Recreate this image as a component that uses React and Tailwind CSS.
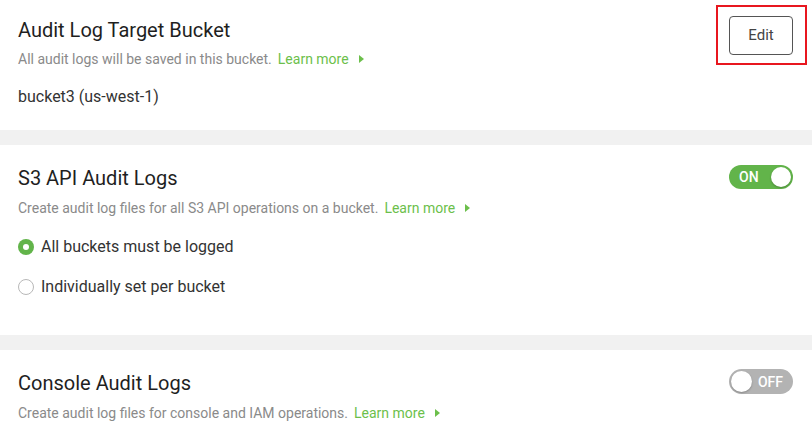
import React from 'react'

function LearnMore() {
  return (
    <a className="ml-[6px] inline-flex items-center text-[#6cbf4b]" href="#">
      Learn more
      <svg className="ml-[10px] w-[5px] h-[8px]" viewBox="0 0 5 8" aria-hidden="true">
        <path d="M0 0 L5 4 L0 8 Z" fill="#6cbf4b" />
      </svg>
    </a>
  )
}

function Toggle({ on }) {
  if (on) {
    return (
      <div className="w-[64px] h-[24px] rounded-full bg-[#62b44a] flex items-center justify-between pl-[10px] pr-[2px]">
        <span className="text-white text-[14px] font-medium leading-none">ON</span>
        <span className="w-[20px] h-[20px] rounded-full bg-white shadow-[0_1px_2px_rgba(0,0,0,0.25)]" />
      </div>
    )
  }
  return (
    <div className="w-[64px] h-[25px] rounded-full bg-[#b3b3b3] flex items-center justify-between pl-[2px] pr-[10px]">
      <span className="w-[21px] h-[21px] rounded-full bg-white shadow-[0_1px_2px_rgba(0,0,0,0.25)]" />
      <span className="text-white text-[14px] font-medium leading-none">OFF</span>
    </div>
  )
}

function Radio({ checked, label }) {
  return (
    <label className="flex items-center h-5">
      {checked ? (
        <span className="w-[16px] h-[16px] rounded-full bg-[#62b44a] flex items-center justify-center">
          <span className="w-[6px] h-[6px] rounded-full bg-white" />
        </span>
      ) : (
        <span className="w-[16px] h-[16px] rounded-full border border-[#b8b8b8] bg-white" />
      )}
      <span className="ml-[7px] text-[16px] text-[#333]">{label}</span>
    </label>
  )
}

export default function App() {
  return (
    <div className="w-[812px] h-[438px] bg-[#f1f1f1] overflow-hidden text-[#222]" style={{ fontFamily: 'Roboto, "Noto Sans", sans-serif' }}>
      {/* Target bucket */}
      <section className="h-[130px] bg-white pl-[18px] pr-[19px] pt-[18px] flex justify-between items-start">
        <div>
          <h2 className="text-[20px] leading-6 text-[#1f1f1f]">Audit Log Target Bucket</h2>
          <p className="mt-[7px] text-[14px] leading-5 text-[#8a8a8a]">
            All audit logs will be saved in this bucket.
            <LearnMore />
          </p>
          <p className="mt-[18px] text-[16px] leading-5 text-[#333]">bucket3 (us-west-1)</p>
        </div>
        <div className="relative mt-[-2px]">
          <button className="w-[64px] h-[39px] rounded-[4px] border border-[#555] bg-white text-[15px] text-[#444]">
            Edit
          </button>
          <div className="absolute left-[-13px] top-[-11px] w-[91px] h-[60px] border-2 border-[#e8161f] pointer-events-none" />
        </div>
      </section>

      {/* S3 API */}
      <section className="mt-[15px] h-[190px] bg-white pl-[18px] pr-[19px] pt-[21px] flex justify-between items-start">
        <div>
          <h2 className="text-[20px] leading-6 text-[#1f1f1f]">S3 API Audit Logs</h2>
          <p className="mt-2 text-[14px] leading-5 text-[#8a8a8a]">
            Create audit log files for all S3 API operations on a bucket.
            <LearnMore />
          </p>
          <div className="mt-[19px] flex flex-col gap-5">
            <Radio checked label="All buckets must be logged" />
            <Radio label="Individually set per bucket" />
          </div>
        </div>
        <div className="mt-[-1px]">
          <Toggle on />
        </div>
      </section>

      {/* Console */}
      <section className="mt-[15px] h-[88px] bg-white pl-[18px] pr-[19px] pt-[21px] flex justify-between items-start">
        <div>
          <h2 className="text-[20px] leading-6 text-[#1f1f1f]">Console Audit Logs</h2>
          <p className="mt-2 text-[14px] leading-5 text-[#8a8a8a]">
            Create audit log files for console and IAM operations.
            <LearnMore />
          </p>
        </div>
        <div className="mt-[-2px]">
          <Toggle />
        </div>
      </section>
    </div>
  )
}
